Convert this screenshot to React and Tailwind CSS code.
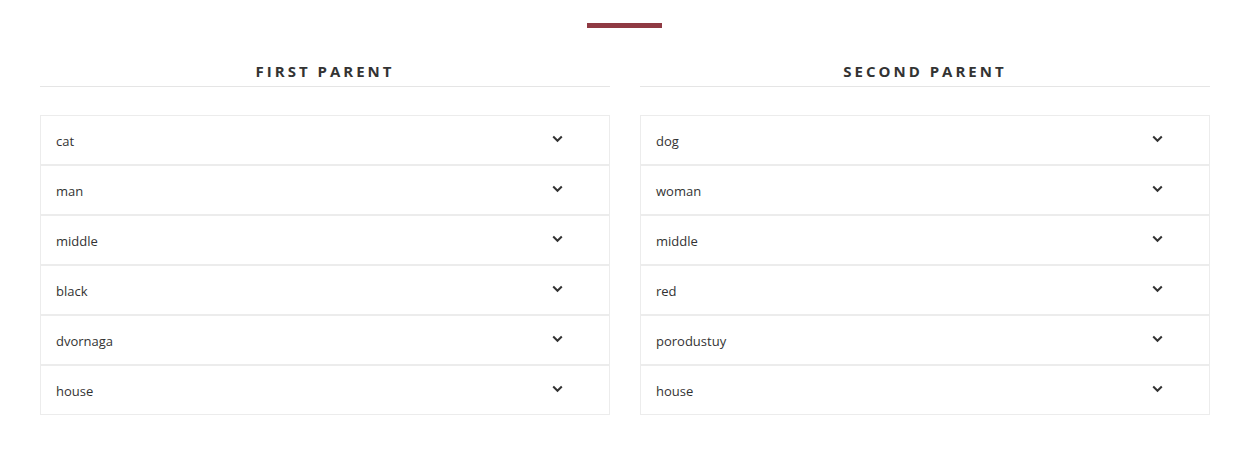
import React from 'react';

const columns = [
  { title: 'First Parent', items: ['cat', 'man', 'middle', 'black', 'dvornaga', 'house'] },
  { title: 'Second Parent', items: ['dog', 'woman', 'middle', 'red', 'porodustuy', 'house'] },
];

const Chevron = () => (
  <svg width="11" height="8" viewBox="0 0 11 8" fill="none" className="text-[#333]">
    <path d="M1.2 1.5 L5.5 5.8 L9.8 1.5" stroke="currentColor" strokeWidth="2" />
  </svg>
);

const App = () => {
  return (
    <div className="w-[1256px] h-[469px] bg-white font-['Open_Sans',sans-serif] px-[40px]">
      <div className="w-[1168px] flex justify-center pt-[23px]">
        <div className="w-[75px] h-[5px] bg-[#8f3a43]" />
      </div>
      <div className="flex gap-[30px] pt-[33px]">
        {columns.map((col) => (
          <div key={col.title} className="w-[570px]">
            <h2 className="text-center uppercase font-bold text-[15px] tracking-[3px] text-[#333] leading-[20px] pb-[5px] border-b border-[#e5e5e5]">
              {col.title}
            </h2>
            <div className="mt-[28px]">
              {col.items.map((item, i) => (
                <div
                  key={i}
                  className="h-[50px] border border-[#ececec] flex items-center justify-between pl-[15px] pr-[46px] cursor-pointer"
                >
                  <span className="text-[13px] text-[#333] pt-[4px]">{item}</span>
                  <span className="-mt-[3px]"><Chevron /></span>
                </div>
              ))}
            </div>
          </div>
        ))}
      </div>
    </div>
  );
};

export default App;
